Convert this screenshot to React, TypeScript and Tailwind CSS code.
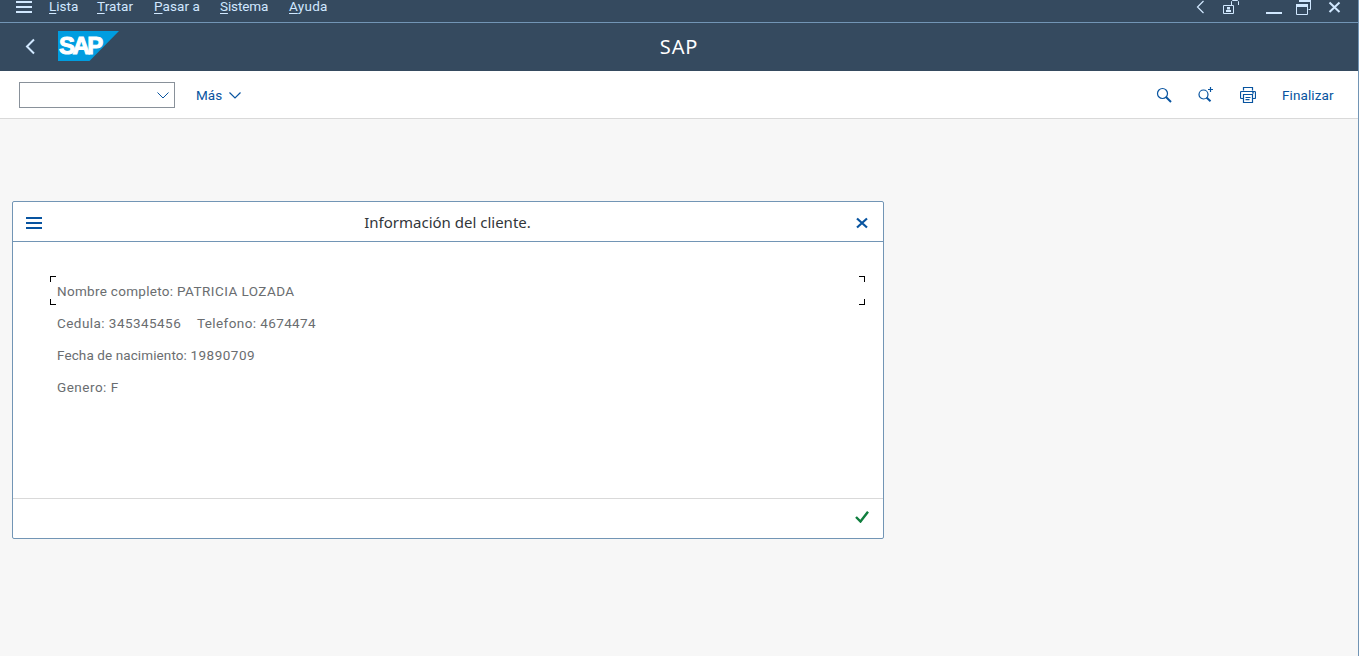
const menuItems = [
  { key: 'L', rest: 'ista', cls: 'w-[48px] tracking-[0px]' },
  { key: 'T', rest: 'ratar', cls: 'w-[57px] tracking-[0.1px]' },
  { key: 'P', rest: 'asar a', cls: 'w-[66px] tracking-[0.1px]' },
  { key: 'S', rest: 'istema', cls: 'w-[69px] tracking-[-0.1px]' },
  { key: 'A', rest: 'yuda', cls: 'w-[60px] tracking-[0.3px]' },
];

function MenuBar() {
  return (
    <nav className="flex h-[23px] shrink-0 items-start border-b border-[#7295b5] text-[#d1e8ff]">
      <svg className="ml-4 h-[14px] w-4 shrink-0" viewBox="0 0 16 14" fill="currentColor" shapeRendering="crispEdges">
        <path d="M0 1h16v2H0zM0 6h16v2H0zM0 11h16v2H0z" />
      </svg>
      <div className="ml-[17px] flex text-[13.5px] leading-[12px]">
        {menuItems.map((m) => (
          <span key={m.key} className={`shrink-0 whitespace-pre ${m.cls}`}>
            <span className="underline underline-offset-2">{m.key}</span>
            {m.rest}
          </span>
        ))}
      </div>
      <svg className="mr-[9px] ml-auto h-[22px] w-[159px] shrink-0" viewBox="1190 0 159 22" fill="none" stroke="currentColor">
        <path d="M1203.500 1L1197.500 7l6 6" strokeWidth="1.200" />
        <path d="M1223.500 5.500h10v8h-10zM1231.500 5.500V1.500l1-1h5l1 1V5" />
        <path d="M1227 7h3v2.500h-3zM1226 10h5v2h-5z" fill="currentColor" stroke="none" />
        <path d="M1266 12h16v2h-16z" fill="currentColor" stroke="none" />
        <path d="M1296.500 4.500h11v10h-11zM1299.500 2V0M1310.500 0v9.500h-2" />
        <path d="M1296 4h12v3h-12zM1299 0h12v2h-12z" fill="currentColor" stroke="none" />
        <path d="M1329.500 2.500l10 9.500M1339.500 2.500l-10 9.500" strokeWidth="2" />
      </svg>
    </nav>
  );
}

function TitleBar() {
  return (
    <header className="grid h-12 shrink-0 grid-cols-[120px_1fr_120px] items-center text-white">
      <div className="flex items-center">
        <svg className="ml-6 h-5 w-3" viewBox="0 0 12 20" fill="none" stroke="#d1e8ff" strokeWidth="2">
          <path d="M10 2.500L3 9.500l7 7" />
        </svg>
        <div className="relative ml-[22px] h-[30px] w-[61px] -translate-y-px">
          <svg className="absolute inset-0 h-full w-full" viewBox="0 0 61 30">
            <path d="M0 0h61L31.500 30H0z" fill="#009de0" />
          </svg>
          <span className="absolute top-[3px] left-px font-['Liberation_Sans'] text-[24px] leading-6 font-bold tracking-[-2.6px] text-white [-webkit-text-stroke:1px_white]">
            SAP
          </span>
        </div>
      </div>
      <h1 className="text-center font-['Noto_Sans'] text-[20px] leading-6 tracking-[0.8px]">SAP</h1>
    </header>
  );
}

function Toolbar() {
  return (
    <div className="flex h-12 shrink-0 items-center border-b border-[#d9d9d9] bg-white text-[13.5px] leading-5 text-[#0854a0]">
      <div className="ml-[19px] flex h-[26px] w-[156px] items-center justify-end border border-[#89919a] pr-[5px]">
        <svg className="h-[7px] w-3 translate-y-px" viewBox="0 0 12 7" fill="none" stroke="currentColor">
          <path d="M.5 .5L6 6l5.500-5.500" />
        </svg>
      </div>
      <span className="ml-[21px] w-[26px]">Más</span>
      <svg className="ml-[7px] h-[7px] w-3 translate-y-px" viewBox="0 0 12 7" fill="none" stroke="currentColor" strokeWidth="1.2">
        <path d="M.5 .5L6 6l5.500-5.500" />
      </svg>
      <svg className="ml-auto h-4 w-4" viewBox="0 0 16 16" fill="none" stroke="currentColor">
        <circle cx="6.500" cy="6.500" r="5" strokeWidth="1.200" />
        <path d="M10 10l5 5" strokeWidth="2" />
      </svg>
      <svg className="ml-[26px] h-4 w-4" viewBox="0 0 16 16" fill="none" stroke="currentColor">
        <circle cx="5.500" cy="7.500" r="4.500" strokeWidth="1.200" />
        <path d="M8.500 10.500l4 3.700" strokeWidth="2" />
        <path d="M12.500 0v5M10 2.500h5" strokeWidth="1.200" />
      </svg>
      <svg className="ml-[26px] h-4 w-4" viewBox="0 0 16 16" fill="none" stroke="currentColor" strokeWidth="1.200">
        <path d="M3.500 3.500v-3h9v3M3.500 11.500h-2a1 1 0 0 1-1-1v-5a1 1 0 0 1 1-1h13a1 1 0 0 1 1 1v5a1 1 0 0 1-1 1h-2M3.500 7.500h9v8h-9zM5.500 10.500h5M5.500 12.700h4M12 5.800h2" />
      </svg>
      <span className="ml-[26px] w-[76px] tracking-[0.1px]">Finalizar</span>
    </div>
  );
}

function ClientDialog() {
  return (
    <section className="mt-[82px] ml-3 flex h-[338px] w-[872px] flex-col rounded-[2px] border border-[#7295b5] bg-white">
      <div className="flex h-10 shrink-0 items-center border-b border-[#7295b5] text-[#0854a0]">
        <svg className="ml-[13px] h-3 w-4 translate-y-px" viewBox="0 0 16 12" fill="currentColor" shapeRendering="crispEdges">
          <path d="M0 0h16v2H0zM0 5h16v2H0zM0 10h16v2H0z" />
        </svg>
        <h2 className="flex-1 pr-[3px] text-center font-['Noto_Sans'] text-[15px] leading-5 text-[#32363a]">Información del cliente.</h2>
        <svg className="mr-[15px] h-3 w-3 translate-y-px" viewBox="0 0 12 12" fill="none" stroke="currentColor" strokeWidth="2.200">
          <path d="M1 1.500l10 9M11 1.500l-10 9" />
        </svg>
      </div>
      <div className="flex-1 pt-[34px] pr-[18px] pl-[37px] text-[13.5px] text-[#6a6d70]">
        <div className="flex justify-between">
          <div className="flex">
            <svg className="h-[29px] w-[7px]" viewBox="0 0 7 29" fill="none" stroke="black" shapeRendering="crispEdges">
              <path d="M6 .5H.5V6M.5 23v5.500H6" />
            </svg>
            <p className="pt-[5px] leading-5">
              <span className="tracking-[0.3px]">Nombre completo: </span>
              <span className="tracking-[0.45px]">PATRICIA LOZADA</span>
            </p>
          </div>
          <svg className="h-[29px] w-[7px]" viewBox="0 0 7 29" fill="none" stroke="black" shapeRendering="crispEdges">
            <path d="M1 .5h5.500V6M6.500 23v5.500H1" />
          </svg>
        </div>
        <div className="mt-2 flex flex-col gap-3 pl-[7px] leading-5">
          <p className="flex">
            <span className="w-[140px] tracking-[0.45px]">Cedula: 345345456</span>
            <span className="tracking-[0.4px]">Telefono: 4674474</span>
          </p>
          <p>
            <span className="tracking-[0.1px]">Fecha de nacimiento: </span>
            <span className="tracking-[0.5px]">19890709</span>
          </p>
          <p className="tracking-[0.5px]">Genero: F</p>
        </div>
      </div>
      <footer className="flex h-10 shrink-0 items-center justify-end border-t border-[#d9d9d9] pr-[14px]">
        <svg className="h-3 w-[14px] -translate-y-[2px]" viewBox="0 0 14 12" fill="none" stroke="#107e3e" strokeWidth="2.400">
          <path d="M1 6l4.500 4.500L13 .7" />
        </svg>
      </footer>
    </section>
  );
}

export default function App() {
  return (
    <div className="flex h-[656px] w-[1359px] flex-col border-r border-[#7295b5] bg-[#f7f7f7] font-[Roboto,sans-serif]">
      <div className="flex flex-col bg-[#354a5f]">
        <MenuBar />
        <TitleBar />
      </div>
      <Toolbar />
      <main>
        <ClientDialog />
      </main>
    </div>
  );
}
